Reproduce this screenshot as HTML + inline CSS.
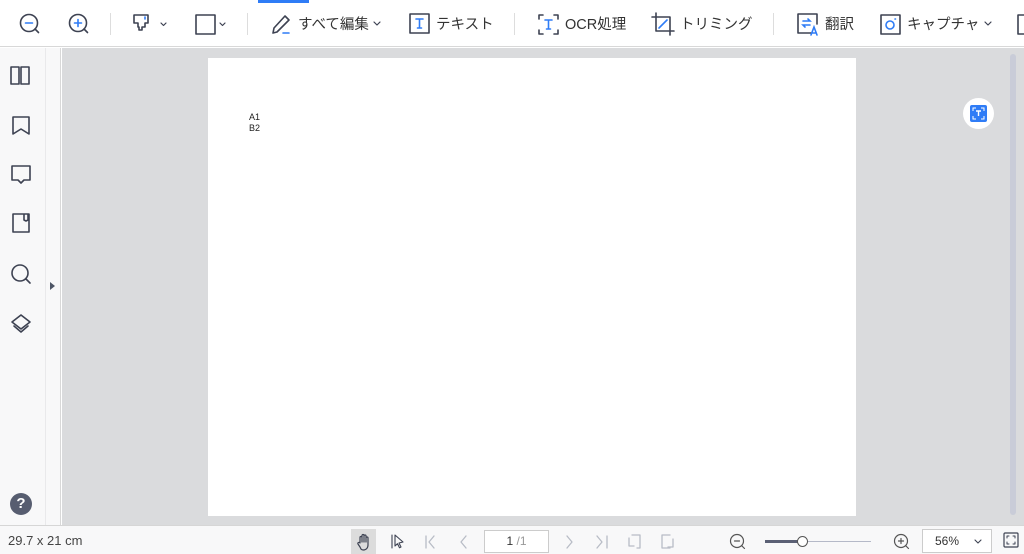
<!DOCTYPE html>
<html><head><meta charset="utf-8"><style>
*{margin:0;padding:0;box-sizing:border-box}
body{width:1024px;height:554px;overflow:hidden;background:#fff;font-family:"Liberation Sans","Noto Sans CJK JP",sans-serif;position:relative;color:#333}
.a{position:absolute}
.tb{left:0;top:0;width:1024px;height:47px;background:#fff;border-bottom:1px solid #d8d8d8}
.t{position:absolute;top:13px;font-size:14.5px;color:#333;white-space:nowrap}
.sep{position:absolute;top:13px;width:1px;height:22px;background:#ddd}
svg{position:absolute;overflow:visible}
.ic{fill:none;stroke:#3d4252;stroke-width:1.6;stroke-linecap:round;stroke-linejoin:round}
.bl{fill:none;stroke:#2f7cf6;stroke-width:1.6;stroke-linecap:round}
.gr{fill:none;stroke:#b8bcc6;stroke-width:1.3;stroke-linecap:round;stroke-linejoin:round}
</style></head><body>
<div class="a tb"></div>
<div class="a" style="left:258px;top:0;width:51px;height:3px;background:#2f7cf6"></div>
<!-- toolbar icons -->
<svg style="left:18px;top:12px" width="24" height="24"><circle class="ic" cx="11" cy="11" r="8.5"/><path class="ic" d="M17 17l3.5 3.5"/><path class="bl" d="M7.5 11h7"/></svg>
<svg style="left:67px;top:12px" width="24" height="24"><circle class="ic" cx="11" cy="11" r="8.5"/><path class="ic" d="M17 17l3.5 3.5"/><path class="bl" d="M7.5 11h7M11 7.5v7"/></svg>
<div class="sep" style="left:110px"></div>
<svg style="left:133px;top:14px" width="36" height="22"><path class="ic" d="M1 1h14v8h-3v4h-3v3h-3v-3H5V9H1z"/><path class="bl" d="M12 3v2"/><path class="ic" d="M28 9l2.5 2.5L33 9" style="stroke-width:1.2"/></svg>
<svg style="left:195px;top:14px" width="36" height="22"><rect class="ic" x="1" y="1" width="19" height="19"/><path class="ic" d="M25 9l2.5 2.5L30 9" style="stroke-width:1.2"/></svg>
<div class="sep" style="left:247px"></div>
<svg style="left:270px;top:13px" width="22" height="24"><path class="ic" d="M3 20l1-5L15 3l4 4L7 19z"/><path class="bl" d="M13 20h6"/></svg>
<div class="t" style="left:298px">すべて編集</div>
<svg style="left:373px;top:20px" width="10" height="8"><path class="ic" d="M1 2l3 3 3-3" style="stroke-width:1.2"/></svg>
<svg style="left:409px;top:13px" width="22" height="22"><rect class="ic" x="1" y="1" width="19" height="19"/><path class="bl" d="M7 6h7M10.5 6v9M8.5 15h4"/></svg>
<div class="t" style="left:436px">テキスト</div>
<div class="sep" style="left:514px"></div>
<svg style="left:538px;top:14px" width="22" height="22"><path class="ic" d="M1 5V1h4M16 1h4v4M20 16v4h-4M5 20H1v-4"/><path class="bl" d="M7 6h7M10.5 6v9M8.5 15h4"/></svg>
<div class="t" style="left:565px">OCR処理</div>
<svg style="left:651px;top:12px" width="24" height="25"><path class="ic" d="M5 1v18h18M1 5h18v18"/><path class="bl" d="M8 16l8-8"/></svg>
<div class="t" style="left:680px">トリミング</div>
<div class="sep" style="left:773px"></div>
<svg style="left:797px;top:13px" width="24" height="24"><path class="ic" d="M14 20H1V1h19v10"/><path class="bl" d="M6 8h7l-2-2M13 12H6l2 2M14 22l3-8 3 8M15 20h4"/></svg>
<div class="t" style="left:825px">翻訳</div>
<svg style="left:880px;top:14px" width="22" height="22"><rect class="ic" x="1" y="1" width="19" height="19"/><circle class="bl" cx="10" cy="11" r="4"/><path class="bl" d="M15 5h.5"/></svg>
<div class="t" style="left:907px">キャプチャ</div>
<svg style="left:984px;top:20px" width="10" height="8"><path class="ic" d="M1 2l3 3 3-3" style="stroke-width:1.2"/></svg>
<svg style="left:1017px;top:14px" width="10" height="22"><path class="ic" d="M8 1H1v19h7"/></svg>
<!-- sidebar -->
<div class="a" style="left:0;top:48px;width:61px;height:477px;background:#f8f8f9;border-right:1px solid #d8d8d8"></div>
<div class="a" style="left:45px;top:48px;width:1px;height:477px;background:#e9e9eb"></div>
<svg style="left:10px;top:66px" width="22" height="22"><rect class="ic" x="1" y="1" width="8" height="17"/><rect class="ic" x="11" y="1" width="8" height="17"/></svg>
<svg style="left:12px;top:116px" width="20" height="22"><path class="ic" d="M1 1h16v17l-8-5-8 5z"/></svg>
<svg style="left:11px;top:165px" width="22" height="22"><path class="ic" d="M1 1h18v14H13l-3 3-3-3H1z"/></svg>
<svg style="left:12px;top:213px" width="20" height="22"><path class="ic" d="M1 1h16v18H1zM12 1v6l2 1 2-1V1"/></svg>
<svg style="left:11px;top:264px" width="22" height="22"><circle class="ic" cx="9" cy="9" r="8"/><path class="ic" d="M15 15l4 4"/></svg>
<svg style="left:11px;top:314px" width="22" height="22"><path class="ic" d="M10 1l9 7-9 7-9-7zM3 12l7 6 7-6"/></svg>
<svg style="left:50px;top:282px" width="6" height="8"><path d="M0 0l5 4-5 4z" fill="#4d5566"/></svg>
<div class="a" style="left:10px;top:493px;width:22px;height:22px;border-radius:50%;background:#575d70;color:#fff;font-weight:bold;font-size:15px;text-align:center;line-height:22px">?</div>
<!-- canvas -->
<div class="a" style="left:62px;top:48px;width:962px;height:477px;background:#dadbdd"></div>
<div class="a" style="left:208px;top:58px;width:648px;height:458px;background:#fff"></div>
<div class="a" style="left:249px;top:112px;font-size:9px;line-height:11px;color:#222">A1<br>B2</div>
<div class="a" style="left:1010px;top:54px;width:6px;height:461px;border-radius:3px;background:#c9ccd8"></div>
<div class="a" style="left:963px;top:98px;width:31px;height:31px;border-radius:50%;background:#fff"></div>
<div class="a" style="left:970px;top:105px;width:17px;height:17px;border-radius:2px;background:#2f7cf6"></div>
<svg style="left:970px;top:105px" width="17" height="17"><path d="M3 6V3h3M11 3h3v3M14 11v3h-3M6 14H3v-3" stroke="#fff" fill="none" stroke-width="1"/><path d="M6 6h5M8.5 6v5" stroke="#fff" stroke-width="1.4"/></svg>
<!-- status -->
<div class="a" style="left:0;top:525px;width:1024px;height:29px;background:#f8f8f9;border-top:1px solid #d6d6d6"></div>
<div class="a" style="left:8px;top:533px;font-size:13px;color:#444">29.7 x 21 cm</div>
<div class="a" style="left:351px;top:529px;width:25px;height:25px;background:#dcdcdc"></div>
<svg style="left:357px;top:533px" width="14" height="18"><path class="ic" style="stroke-width:1.2" d="M3 10V4.5a1 1 0 012 0V9V2.5a1 1 0 012 0V9V3a1 1 0 012 0v6V5a1 1 0 012 0v7c0 3-2 5-4.5 5S4 16 3 14L1 11a1 1 0 012-1z"/></svg>
<svg style="left:391px;top:534px" width="14" height="16"><path class="ic" style="stroke-width:1.1" d="M1 1v13M4 1l8 7-4 1 2 4-1.5.7-2-4L4 12z"/></svg>
<svg style="left:424px;top:535px" width="14" height="14"><path class="gr" d="M2 1v12M10 1L5 7l5 6"/></svg>
<svg style="left:457px;top:535px" width="14" height="14"><path class="gr" d="M9 1L4 7l5 6"/></svg>
<div class="a" style="left:484px;top:530px;width:65px;height:23px;border:1px solid #ccc;background:#fff;font-size:12px;text-align:center;line-height:21px;color:#333">1 <span style="color:#999">/1</span></div>
<svg style="left:563px;top:535px" width="14" height="14"><path class="gr" d="M4 1l5 6-5 6"/></svg>
<svg style="left:595px;top:535px" width="14" height="14"><path class="gr" d="M2 1l5 6-5 6M12 1v12"/></svg>
<svg style="left:628px;top:534px" width="14" height="16"><path class="gr" d="M4 1h8v13H9M1 4v8h5"/></svg>
<svg style="left:661px;top:534px" width="14" height="16"><path class="gr" d="M9 14H1V1h8M12 5v8H7"/></svg>
<svg style="left:729px;top:533px" width="18" height="18"><circle class="ic" style="stroke:#555;stroke-width:1.2" cx="8" cy="8" r="6.5"/><path class="ic" style="stroke:#555;stroke-width:1.2" d="M12.5 12.5l3 3M5.5 8h5"/></svg>
<div class="a" style="left:765px;top:540px;width:38px;height:3px;background:#5b6075"></div>
<div class="a" style="left:803px;top:541px;width:68px;height:1px;background:#b5b9c8"></div>
<div class="a" style="left:797px;top:536px;width:11px;height:11px;border-radius:50%;background:#fff;border:1.5px solid #555"></div>
<svg style="left:893px;top:533px" width="18" height="18"><circle class="ic" style="stroke:#555;stroke-width:1.2" cx="8" cy="8" r="6.5"/><path class="ic" style="stroke:#555;stroke-width:1.2" d="M12.5 12.5l3 3M5.5 8h5M8 5.5v5"/></svg>
<div class="a" style="left:922px;top:529px;width:70px;height:24px;border:1px solid #ccc;background:#fff;font-size:12px;line-height:22px;padding-left:12px;color:#333">56%</div>
<svg style="left:974px;top:539px" width="8" height="6"><path class="ic" style="stroke-width:1.1" d="M1 1l3 3 3-3"/></svg>
<svg style="left:1003px;top:532px" width="17" height="17"><rect class="ic" style="stroke-width:1.2" x="1" y="1" width="14" height="14" rx="1"/><path class="ic" style="stroke-width:1" d="M4 6V4h2M10 4h2v2M12 10v2h-2M6 12H4v-2"/></svg>
</body></html>
